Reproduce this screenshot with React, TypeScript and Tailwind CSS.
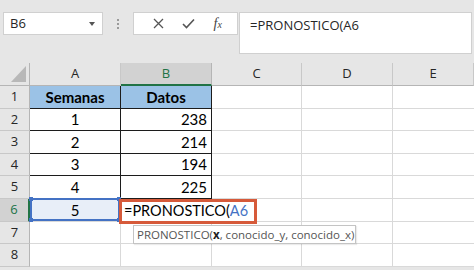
import React from 'react';

const cols = ['A', 'B', 'C', 'D', 'E'];

type Cell = { text?: string; align?: 'left' | 'center' | 'right'; bold?: boolean; table?: boolean; head?: boolean };

const rows: Cell[][] = [
  [{ text: 'Semanas', align: 'center', bold: true, table: true, head: true }, { text: 'Datos', align: 'center', bold: true, table: true, head: true }],
  [{ text: '1', align: 'center', table: true }, { text: '238', align: 'right', table: true }],
  [{ text: '2', align: 'center', table: true }, { text: '214', align: 'right', table: true }],
  [{ text: '3', align: 'center', table: true }, { text: '194', align: 'right', table: true }],
  [{ text: '4', align: 'center', table: true }, { text: '225', align: 'right', table: true }],
  [{ text: '5', align: 'center' }, {}],
  [{}, {}],
  [{}, {}],
];

const App: React.FC = () => {
  return (
    <div className="w-[474px] h-[270px] overflow-hidden bg-[#e6e6e6] relative font-['Open_Sans',sans-serif] text-[#262626]">
      {/* Name box + formula bar */}
      <div className="flex items-start h-[63px] pt-[12px] pl-[3px]">
        <div className="w-[100px] h-[23px] bg-white border border-[#d0d0d0] flex items-center justify-between pl-[6px] pr-[7px] text-[13px]">
          <span>B6</span>
          <span className="w-0 h-0 border-l-[3px] border-r-[3px] border-t-[4px] border-l-transparent border-r-transparent border-t-[#555]" />
        </div>
        <div className="w-[30px] h-[23px] flex flex-col items-center justify-center gap-[2px]">
          <span className="w-[2px] h-[2px] bg-[#9a9a9a]" />
          <span className="w-[2px] h-[2px] bg-[#9a9a9a]" />
          <span className="w-[2px] h-[2px] bg-[#9a9a9a]" />
        </div>
        <div className="w-[105px] h-[23px] bg-white border border-[#d0d0d0] flex items-center justify-around px-[4px] text-[#555]">
          <svg width="11" height="11" viewBox="0 0 11 11" className="ml-[6px]">
            <path d="M1 1 L10 10 M10 1 L1 10" stroke="#555" strokeWidth="1.3" fill="none" />
          </svg>
          <svg width="13" height="11" viewBox="0 0 13 11">
            <path d="M1 6 L4.5 9.5 L12 1.5" stroke="#555" strokeWidth="1.6" fill="none" />
          </svg>
          <span className="font-['Liberation_Serif',serif] italic text-[14px] leading-none text-[#444] mr-[2px]">
            f<span className="text-[10px]">x</span>
          </span>
        </div>
        <div className="ml-[1px] w-[233px] h-[42px] bg-white border border-[#d0d0d0] pl-[10px] pt-[3px] text-[13px] whitespace-nowrap">
          =PRONOSTICO(A6
        </div>
      </div>

      {/* Sheet */}
      <div className="grid grid-cols-[30px_91px_91px_90px_91px_1fr] bg-white">
        {/* header row */}
        <div className="h-[23px] bg-[#e6e6e6] border-r border-b border-[#b5b5b5] relative">
          <svg width="15" height="16" viewBox="0 0 15 16" className="absolute right-[3px] bottom-[3px]">
            <path d="M15 0 L15 16 L0 16 Z" fill="#b8b8b8" />
          </svg>
        </div>
        {cols.map((c) => (
          <div
            key={c}
            className={
              c === 'B'
                ? 'h-[23px] bg-[#d2d2d2] border-r border-[#b5b5b5] border-b-2 border-b-[#217346] text-[#217346] flex items-center justify-center text-[13px]'
                : 'h-[23px] bg-[#e6e6e6] border-r border-b border-[#c8c8c8] border-b-[#b5b5b5] flex items-center justify-center text-[13px]'
            }
          >
            {c}
          </div>
        ))}

        {rows.map((r, i) => {
          const n = i + 1;
          const active = n === 6;
          return (
            <React.Fragment key={n}>
              <div
                className={
                  active
                    ? 'h-[22.6px] bg-[#d2d2d2] border-r-2 border-r-[#217346] border-b border-b-[#c8c8c8] text-[#217346] flex items-center justify-center text-[13px]'
                    : 'h-[22.6px] bg-[#e6e6e6] border-r border-b border-[#c8c8c8] border-r-[#b5b5b5] flex items-center justify-center text-[13px]'
                }
              >
                {n}
              </div>
              {r.map((cell, j) => {
                const isRef = n === 6 && j === 0;
                return (
                  <div
                    key={j}
                    className={[
                      "h-[22.6px] flex items-center px-[4px] font-['Lato',sans-serif] text-[15px] text-black relative",
                      cell.align === 'center' ? 'justify-center' : cell.align === 'right' ? 'justify-end' : 'justify-start',
                      cell.bold ? 'font-bold text-[#1a1a1a]' : '',
                      cell.head ? 'bg-[#9bc2e6]' : '',
                      cell.table ? 'border-r border-b border-[#1c1c1c]' : 'border-r border-b border-[#d9d9d9]',
                      isRef ? 'bg-[#e8eef8]' : '',
                    ].join(' ')}
                  >
                    {cell.text}
                    {isRef && (
                      <div className="absolute left-0 top-[-1px] right-0 bottom-0 border-2 border-[#4472c4]">
                        <span className="absolute left-[-3px] top-[-3px] w-[4px] h-[4px] bg-[#4472c4]" />
                        <span className="absolute left-[-3px] bottom-[-3px] w-[4px] h-[4px] bg-[#4472c4]" />
                        <span className="absolute right-[-3px] top-[-3px] w-[4px] h-[4px] bg-[#4472c4]" />
                        <span className="absolute right-[-3px] bottom-[-3px] w-[4px] h-[4px] bg-[#4472c4]" />
                      </div>
                    )}
                  </div>
                );
              })}
              <div className="h-[22.6px] border-r border-b border-[#d9d9d9]" />
              <div className="h-[22.6px] border-r border-b border-[#d9d9d9]" />
              <div className="h-[22.6px] border-b border-[#d9d9d9]" />
            </React.Fragment>
          );
        })}
      </div>

      {/* Edit cell B6 with annotation box */}
      <div className="absolute left-[119px] top-[199px] w-[138px] h-[25px] bg-white border-[3px] border-[#d65a3a] flex items-center pl-[2px] font-['Lato',sans-serif] text-[14.5px] text-black leading-none whitespace-nowrap overflow-hidden">
        =PRONOSTICO(<span className="text-[#4472c4]">A6</span>
      </div>

      {/* Function tooltip */}
      <div className="absolute left-[133px] top-[225px] w-[223px] h-[19px] bg-white border border-[#c4c4c4] shadow-[1px_1px_1px_rgba(0,0,0,0.08)] flex items-center pl-[3px] text-[11.5px] text-[#555] leading-none whitespace-nowrap">
        PRONOSTICO(<b className="text-[#222]">x</b>, conocido_y, conocido_x)
      </div>
    </div>
  );
};

export default App;
